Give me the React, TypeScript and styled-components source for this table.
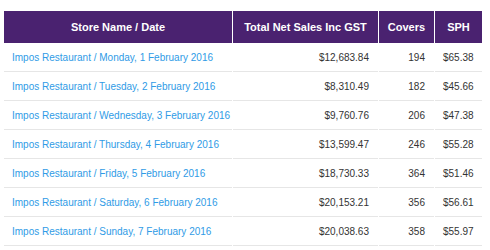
import styled, { createGlobalStyle } from "styled-components";

const GlobalStyle = createGlobalStyle`
    body {
        margin: 0;
        background: #fff;
        font-family: "Liberation Sans", Arial, sans-serif;
    }
    *, *::before, *::after {
        box-sizing: border-box;
    }
`;

const Wrapper = styled.div`
    padding: 11px 0 0 3px;
`;

const Table = styled.table`
    width: 477px;
    border-collapse: separate;
    border-spacing: 1px 0;
    table-layout: fixed;
    font-size: 10px;
`;

const HeadCell = styled.th<{ $width: number }>`
    width: ${(p) => p.$width}px;
    height: 32px;
    padding: 0 4px;
    background: #4a2270;
    color: #fff;
    font-size: 11px;
    font-weight: bold;
    text-align: center;
    white-space: nowrap;
`;

const Cell = styled.td<{ $align?: "left" | "right" }>`
    height: 29px;
    padding: 0 9px 0 8px;
    border-bottom: 1px solid #e6e6e6;
    text-align: ${(p) => p.$align ?? "right"};
    color: #333;
    white-space: nowrap;
`;

const StoreLink = styled.a`
    color: #2f9be6;
    text-decoration: none;
`;

const rows = [
    { day: "Monday, 1 February 2016", sales: "$12,683.84", covers: 194, sph: "$65.38" },
    { day: "Tuesday, 2 February 2016", sales: "$8,310.49", covers: 182, sph: "$45.66" },
    { day: "Wednesday, 3 February 2016", sales: "$9,760.76", covers: 206, sph: "$47.38" },
    { day: "Thursday, 4 February 2016", sales: "$13,599.47", covers: 246, sph: "$55.28" },
    { day: "Friday, 5 February 2016", sales: "$18,730.33", covers: 364, sph: "$51.46" },
    { day: "Saturday, 6 February 2016", sales: "$20,153.21", covers: 356, sph: "$56.61" },
    { day: "Sunday, 7 February 2016", sales: "$20,038.63", covers: 358, sph: "$55.97" },
];

const App = () => {
    return (
        <Wrapper>
            <GlobalStyle />
            <Table>
                <thead>
                    <tr>
                        <HeadCell $width={228}>Store Name / Date</HeadCell>
                        <HeadCell $width={145}>Total Net Sales Inc GST</HeadCell>
                        <HeadCell $width={55}>Covers</HeadCell>
                        <HeadCell $width={47}>SPH</HeadCell>
                    </tr>
                </thead>
                <tbody>
                    {rows.map((r) => (
                        <tr key={r.day}>
                            <Cell $align="left">
                                <StoreLink href="#">
                                    Impos Restaurant / {r.day}
                                </StoreLink>
                            </Cell>
                            <Cell>{r.sales}</Cell>
                            <Cell>{r.covers}</Cell>
                            <Cell>{r.sph}</Cell>
                        </tr>
                    ))}
                </tbody>
            </Table>
        </Wrapper>
    );
};

export default App;
